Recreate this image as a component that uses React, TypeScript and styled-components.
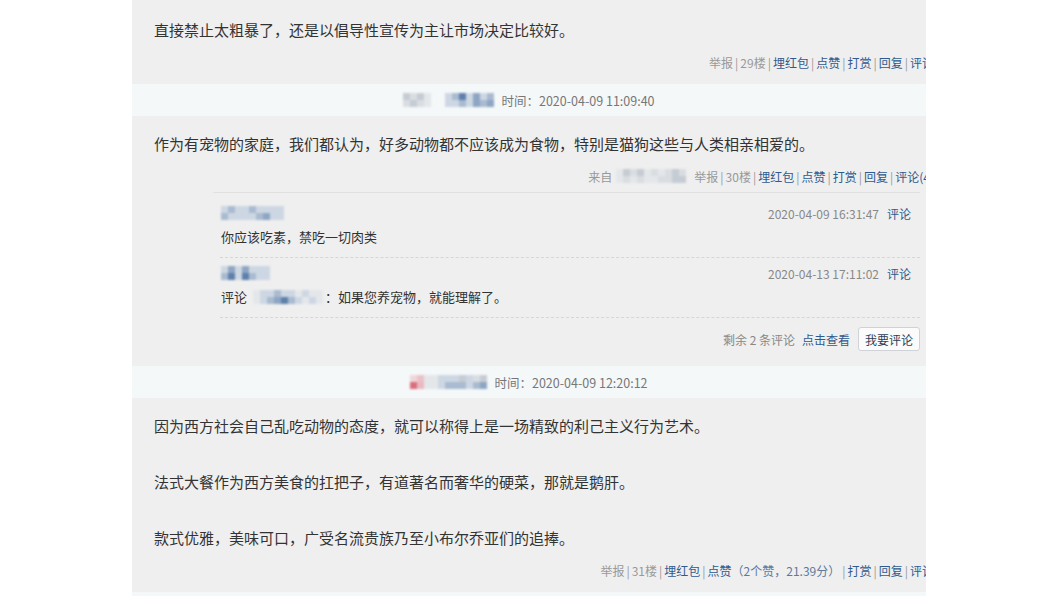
import styled, { createGlobalStyle } from "styled-components";

const Colors = {
  page: "#ffffff",
  panel: "#efefef",
  header: "#f5f8f9",
  text: "#333333",
  muted: "#999999",
  time: "#777777",
  link: "#2f5a8e",
  soft: "#5b7a9c",
};

const GlobalStyle = createGlobalStyle`
  html, body {
    margin: 0;
    padding: 0;
    background: ${Colors.page};
  }
  body {
    font-family: "Noto Sans CJK SC", "Noto Sans", sans-serif;
    color: ${Colors.text};
  }
`;

type MosaicProps = { rows: string[][] };

const Mosaic = ({ rows }: MosaicProps) => (
  <MosaicGrid $cols={rows[0].length}>
    {rows.flat().map((c, i) => (
      <Cell key={i} style={{ background: c }} />
    ))}
  </MosaicGrid>
);

interface ActionItem {
  label: string;
  kind: "muted" | "link" | "soft";
}

const ActionBar = ({ lead, items }: { lead?: React.ReactNode; items: ActionItem[][] }) => (
  <Actions>
    {lead}
    {items.map((group, gi) => (
      <Group key={gi}>
        {gi > 0 && <Sep>|</Sep>}
        {group.map((it, ii) => (
          <ActionText key={ii} $kind={it.kind}>
            {it.label}
          </ActionText>
        ))}
      </Group>
    ))}
  </Actions>
);

const floorItems = (floor: string, zanExtra?: string): ActionItem[][] => [
  [{ label: "举报", kind: "muted" }],
  [{ label: floor, kind: "muted" }],
  [{ label: "埋红包", kind: "link" }],
  zanExtra
    ? [
        { label: "点赞", kind: "link" },
        { label: zanExtra, kind: "soft" },
      ]
    : [{ label: "点赞", kind: "link" }],
  [{ label: "打赏", kind: "link" }],
  [{ label: "回复", kind: "link" }],
];

const g1 = "#d9dde2";
const g2 = "#c6ccd3";
const g3 = "#e4e7ea";
const b1 = "#5f80ab";
const b2 = "#a9bbd0";
const b3 = "#cdd7e3";
const b4 = "#8ea6c3";

export default function App() {
  return (
    <Page>
      <GlobalStyle />
      <Panel>
        <Post>
          <Paragraph>直接禁止太粗暴了，还是以倡导性宣传为主让市场决定比较好。</Paragraph>
          <ActionBar items={[...floorItems("29楼"), [{ label: "评论", kind: "link" }]]} />
        </Post>

        <FloorHeader>
          <Mosaic rows={[[g2, g1, g2, g3], [g1, g2, g1, g3]]} />
          <Gap />
          <Mosaic rows={[[b3, b2, b1, b3, b4, b3, b2], [b3, b3, b2, b3, b4, b2, b4]]} />
          <TimeText>时间：2020-04-09 11:09:40</TimeText>
        </FloorHeader>

        <Post>
          <Paragraph>
            作为有宠物的家庭，我们都认为，好多动物都不应该成为食物，特别是猫狗这些与人类相亲相爱的。
          </Paragraph>
          <ActionBar
            lead={
              <Lead>
                <ActionText $kind="muted">来自</ActionText>
                <Mosaic
                  rows={[
                    [g3, g2, g1, g2, g3, g1, g3, g1, g2, g1],
                    [g3, g1, g3, g1, g3, g3, g1, g1, g2, g2],
                  ]}
                />
              </Lead>
            }
            items={[...floorItems("30楼"), [{ label: "评论(4)", kind: "link" }]]}
          />
          <Comments>
            <CommentItem>
              <CommentHead>
                <Mosaic rows={[[b3, b2, b3, b3, b2, b3, b3, b3, b3], [b2, b3, b3, b3, b3, b2, b4, b3, b3]]} />
                <CommentMeta>
                  2020-04-09 16:31:47<MetaLink>评论</MetaLink>
                </CommentMeta>
              </CommentHead>
              <CommentBody>你应该吃素，禁吃一切肉类</CommentBody>
            </CommentItem>
            <CommentItem>
              <CommentHead>
                <Mosaic rows={[[b3, b4, b3, b4, b3, b3, b3], [b2, b1, b3, b1, b2, b3, b3]]} />
                <CommentMeta>
                  2020-04-13 17:11:02<MetaLink>评论</MetaLink>
                </CommentMeta>
              </CommentHead>
              <CommentBody>
                评论
                <Inline>
                  <Mosaic rows={[[g3, b3, b3, b2, b3, b3, g3, b3, g3, g3], [g3, b3, b2, b4, b1, b2, b3, g3, b3, g3]]} />
                </Inline>
                ：如果您养宠物，就能理解了。
              </CommentBody>
            </CommentItem>
            <CommentFooter>
              <FooterText>剩余 2 条评论</FooterText>
              <MetaLink>点击查看</MetaLink>
              <ReplyButton>我要评论</ReplyButton>
            </CommentFooter>
          </Comments>
        </Post>

        <FloorHeader>
          <Mosaic rows={[["#f0d6da", "#e9c2c8", g3, g3, b3, b3, b3, g2, b3, g1, g2], ["#d96e7d", "#eab8c0", g3, g3, b3, b2, b2, b2, b3, b2, b4]]} />
          <TimeText>时间：2020-04-09 12:20:12</TimeText>
        </FloorHeader>

        <Post>
          <Paragraph>因为西方社会自己乱吃动物的态度，就可以称得上是一场精致的利己主义行为艺术。</Paragraph>
          <Paragraph>法式大餐作为西方美食的扛把子，有道著名而奢华的硬菜，那就是鹅肝。</Paragraph>
          <Paragraph>款式优雅，美味可口，广受名流贵族乃至小布尔乔亚们的追捧。</Paragraph>
          <ActionBar
            items={[...floorItems("31楼", "（2个赞，21.39分）"), [{ label: "评论", kind: "link" }]]}
          />
        </Post>

        <FloorHeader />
      </Panel>
    </Page>
  );
}

const Page = styled.div`
  width: 1060px;
  height: 596px;
  overflow: hidden;
  display: flex;
  background: ${Colors.page};
`;

const Panel = styled.main`
  margin-left: 132px;
  width: 794px;
  height: 596px;
  overflow: hidden;
  padding-top: 2px;
  box-sizing: border-box;
  background: ${Colors.panel};
  display: flex;
  flex-direction: column;
  flex-shrink: 0;
`;

const Post = styled.section`
  padding: 16px 6px 12px 22px;
  display: flex;
  flex-direction: column;
  flex-shrink: 0;
`;

const Paragraph = styled.p`
  margin: 0;
  font-size: 15px;
  line-height: 24px;
  color: ${Colors.text};
  & + & {
    margin-top: 32px;
  }
`;

const Actions = styled.div`
  margin-top: 10px;
  margin-right: -14px;
  display: flex;
  justify-content: flex-end;
  align-items: center;
  height: 20px;
  font-size: 12px;
  white-space: nowrap;
`;

const Lead = styled.span`
  display: inline-flex;
  align-items: center;
  gap: 4px;
  margin-right: 8px;
`;

const Group = styled.span`
  display: inline-flex;
  align-items: center;
`;

const Sep = styled.span`
  color: ${Colors.muted};
  margin: 0 2px;
  font-size: 12px;
`;

const ActionText = styled.span<{ $kind: "muted" | "link" | "soft" }>`
  color: ${(p) =>
    p.$kind === "muted" ? Colors.muted : p.$kind === "soft" ? Colors.soft : Colors.link};
`;

const FloorHeader = styled.div`
  height: 32px;
  flex-shrink: 0;
  background: ${Colors.header};
  display: flex;
  align-items: center;
  justify-content: center;
  gap: 7px;
`;

const Gap = styled.span`
  width: 0;
`;

const TimeText = styled.span`
  font-size: 12.5px;
  color: ${Colors.time};
`;

const MosaicGrid = styled.span<{ $cols: number }>`
  display: inline-grid;
  grid-template-columns: repeat(${(p) => p.$cols}, 7px);
  grid-auto-rows: 7px;
  filter: blur(0.8px);
  vertical-align: middle;
`;

const Cell = styled.span`
  display: block;
`;

const Comments = styled.div`
  margin: 6px 0 0 59px;
  padding-top: 5px;
  border-top: 1px solid #e1e1e1;
  display: flex;
  flex-direction: column;
`;

const CommentItem = styled.div`
  margin-left: 7px;
  padding: 7px 9px 10px 1px;
  border-bottom: 1px dashed #d6d6d6;
`;

const CommentHead = styled.div`
  height: 16px;
  display: flex;
  align-items: center;
  justify-content: space-between;
`;

const CommentMeta = styled.span`
  font-size: 12px;
  color: #888;
  display: inline-flex;
  gap: 8px;
`;

const MetaLink = styled.span`
  font-size: 12px;
  color: ${Colors.link};
`;

const CommentBody = styled.div`
  margin-top: 6px;
  font-size: 13px;
  line-height: 20px;
  color: ${Colors.text};
  display: flex;
  align-items: center;
`;

const Inline = styled.span`
  margin: 0 2px 0 6px;
  display: inline-flex;
`;

const CommentFooter = styled.div`
  margin-top: 9px;
  padding-bottom: 3px;
  display: flex;
  justify-content: flex-end;
  align-items: center;
  gap: 7px;
`;

const FooterText = styled.span`
  font-size: 12px;
  color: #888;
`;

const ReplyButton = styled.button`
  height: 24px;
  width: 62px;
  padding: 0;
  margin-left: 1px;
  font-family: inherit;
  font-size: 12px;
  color: #2b3f5a;
  background: #fbfbfb;
  border: 1px solid #cfd3d8;
  border-radius: 3px;
`;
